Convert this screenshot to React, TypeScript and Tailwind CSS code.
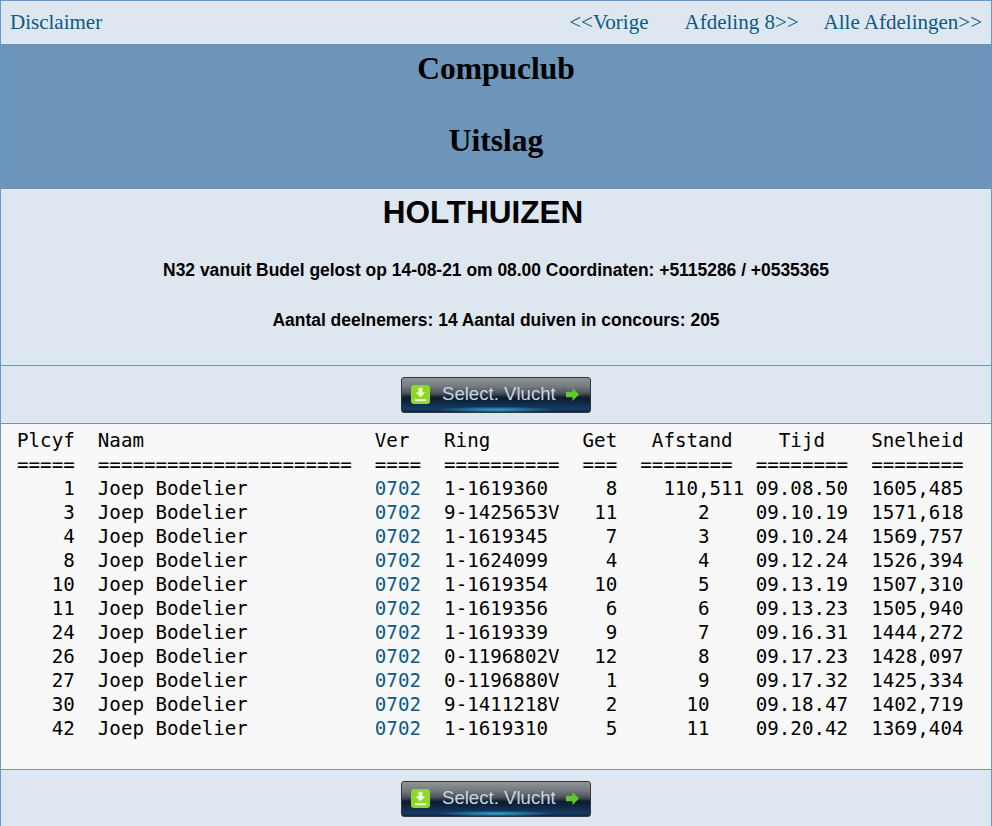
import React from 'react';

const rows = [
  ['    1', '1-1619360 ', '  8', '    110,511', '09.08.50', '1605,485'],
  ['    3', '9-1425653V', ' 11', '       2   ', '09.10.19', '1571,618'],
  ['    4', '1-1619345 ', '  7', '       3   ', '09.10.24', '1569,757'],
  ['    8', '1-1624099 ', '  4', '       4   ', '09.12.24', '1526,394'],
  ['   10', '1-1619354 ', ' 10', '       5   ', '09.13.19', '1507,310'],
  ['   11', '1-1619356 ', '  6', '       6   ', '09.13.23', '1505,940'],
  ['   24', '1-1619339 ', '  9', '       7   ', '09.16.31', '1444,272'],
  ['   26', '0-1196802V', ' 12', '       8   ', '09.17.23', '1428,097'],
  ['   27', '0-1196880V', '  1', '       9   ', '09.17.32', '1425,334'],
  ['   30', '9-1411218V', '  2', '      10   ', '09.18.47', '1402,719'],
  ['   42', '1-1619310 ', '  5', '      11   ', '09.20.42', '1369,404'],
];

const SelectButton = () => (
  <div className="flex h-[36px] w-[190px] items-center rounded-[3px] border border-[#33383e] bg-[radial-gradient(ellipse_60px_3px_at_50%_93%,#2fa6d0_0%,transparent_100%),linear-gradient(to_bottom,#8f9497_0%,#747a7e_25%,#4c5359_45%,#0d1a2c_58%,#12345a_85%,#143c66_92%,#10233c_100%)]">
    <svg width="21" height="21" viewBox="0 0 22 22" className="ml-[8px] shrink-0">
      <path d="M3 1h16l2 2v16l-2 2H3l-2-2V3z" fill="#8fd62a" />
      <path d="M9 4h4v5h3l-5 5-5-5h3z" fill="#f2fbdc" />
      <rect x="5" y="16" width="12" height="2" fill="#f2fbdc" />
    </svg>
    <span className="ml-[11px] font-['Liberation_Sans',sans-serif] text-[18.6px] leading-none text-[#c6d7e3]">Select. Vlucht</span>
    <svg width="15" height="15" viewBox="0 0 16 16" className="ml-[9px] shrink-0">
      <path d="M1 5h7V1l7 7-7 7v-4H1z" fill="#5fc92a" />
    </svg>
  </div>
);

export default function App() {
  return (
    <div className="h-[826px] overflow-hidden border-x border-t border-[#6699cc] bg-[#dee6f0] font-['Liberation_Serif',serif]">
      <nav className="flex h-[43px] items-center px-[9px] text-[21px] text-[#0b5a84]">
        <a>Disclaimer</a>
        <a className="ml-auto">&lt;&lt;Vorige</a>
        <a className="ml-[36px]">Afdeling 8&gt;&gt;</a>
        <a className="ml-[25px]">Alle Afdelingen&gt;&gt;</a>
      </nav>

      <header className="flex h-[145px] flex-col items-center gap-[36px] bg-[#6d94b9] pt-[7px] text-[31.5px] font-bold leading-[36px] text-black">
        <h1>Compuclub</h1>
        <h1>Uitslag</h1>
      </header>

      <section className="flex h-[177px] flex-col items-center border-b border-[#6d94b9] font-['Liberation_Sans',sans-serif] font-bold text-black">
        <h2 className="mt-[5px] pr-[26px] text-[31.5px] leading-[36px]">HOLTHUIZEN</h2>
        <p className="mt-[31px] text-[17.45px] leading-[18px]">N32 vanuit Budel gelost op 14-08-21 om 08.00 Coordinaten: +5115286 / +0535365</p>
        <p className="mt-[32px] text-[17.45px] leading-[18px]">Aantal deelnemers: 14 Aantal duiven in concours: 205</p>
      </section>

      <div className="flex h-[57px] items-center justify-center">
        <SelectButton />
      </div>

      <pre className="h-[347px] border-y border-[#6d94b9] bg-[#f8f8f8] pl-[16px] pt-[5px] font-['DejaVu_Sans_Mono',monospace] text-[19.18px] leading-[24px] text-black">
        {'Plcyf  Naam                    Ver   Ring        Get   Afstand    Tijd    Snelheid\n'}
        {'=====  ======================  ====  ==========  ===  ========  ========  ========\n'}
        {rows.map((r) => (
          <React.Fragment key={r[0]}>
            {`${r[0]}  Joep Bodelier           `}
            <a className="text-[#0b5a84]">0702</a>
            {`  ${r[1]}  ${r[2]}${r[3]} ${r[4]}  ${r[5]}\n`}
          </React.Fragment>
        ))}
      </pre>

      <div className="flex h-[57px] items-center justify-center">
        <SelectButton />
      </div>
    </div>
  );
}
